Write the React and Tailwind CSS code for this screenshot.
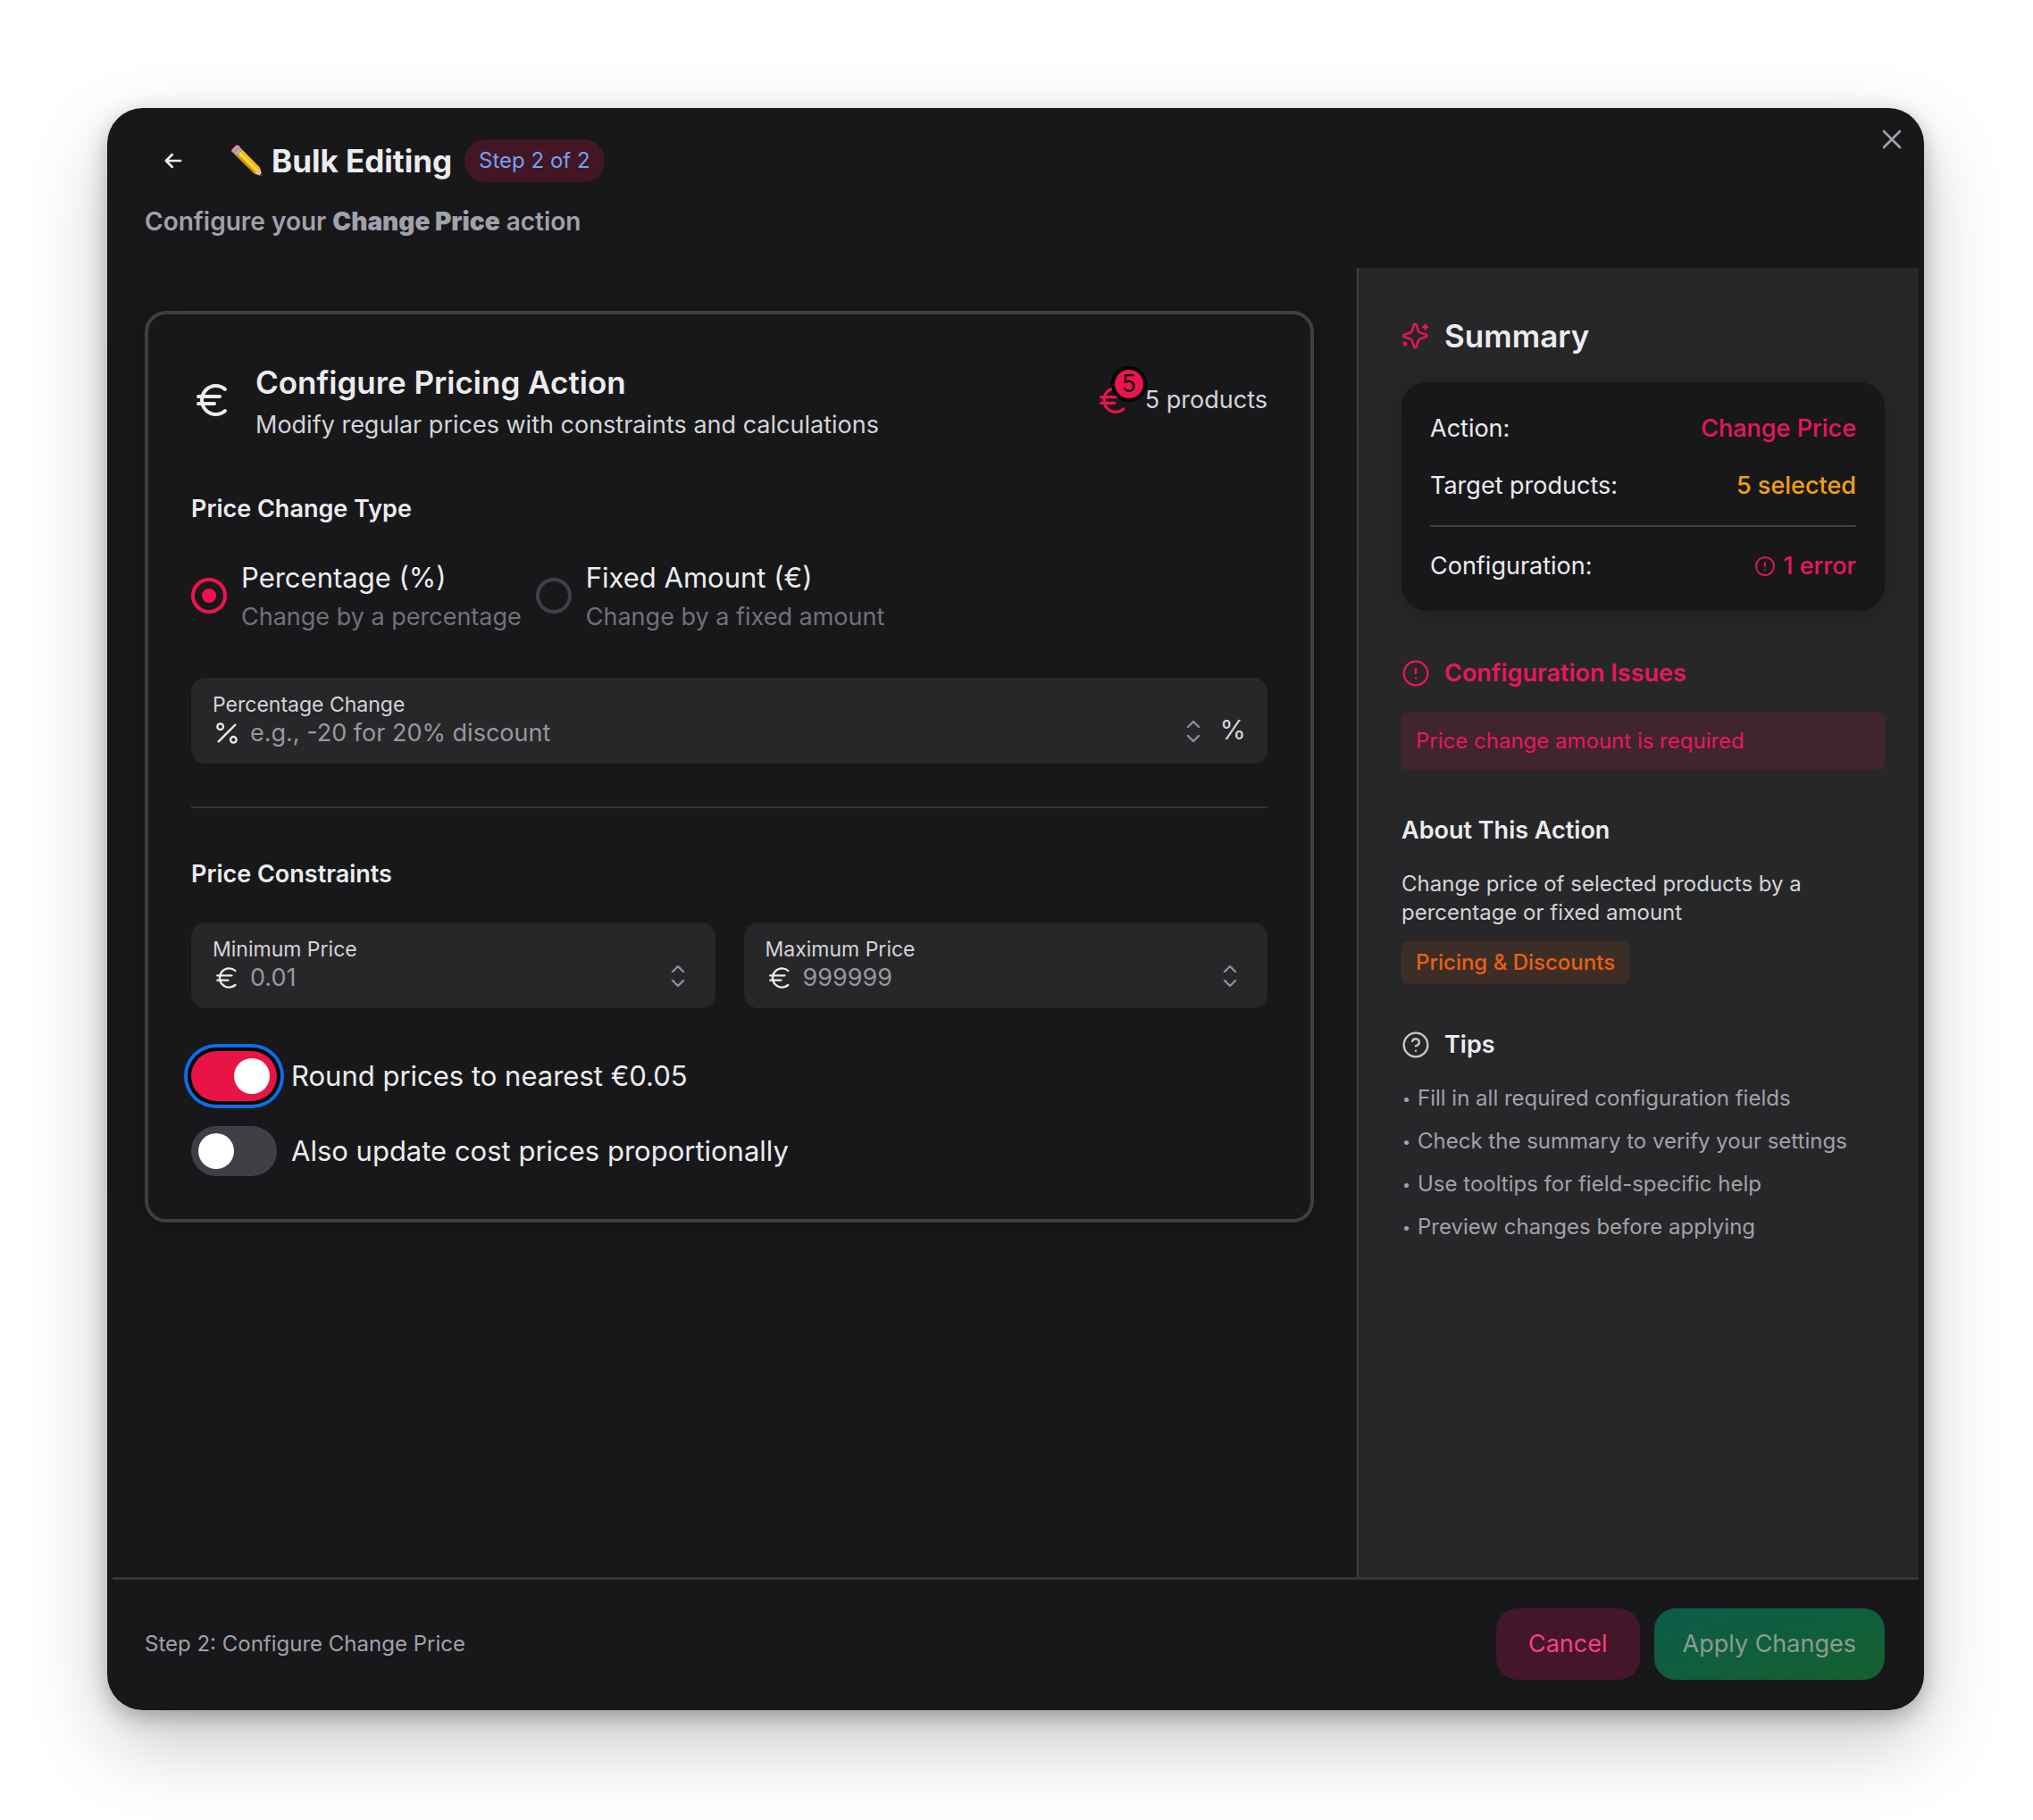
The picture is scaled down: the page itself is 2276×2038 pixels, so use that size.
import React, { useState } from "react"
import { CircleAlert, CircleHelp, Euro, Percent, X } from "lucide-react"

const TIPS = [
    "Fill in all required configuration fields",
    "Check the summary to verify your settings",
    "Use tooltips for field-specific help",
    "Preview changes before applying",
]

const CHANGE_TYPES = [
    {
        id: "percentage",
        title: "Percentage (%)",
        description: "Change by a percentage",
    },
    {
        id: "fixed",
        title: "Fixed Amount (€)",
        description: "Change by a fixed amount",
    },
]

function ArrowLeftIcon({ className }) {
    return (
        <svg
            className={className}
            viewBox="0 0 24 24"
            fill="none"
            stroke="currentColor"
            strokeWidth="2.2"
            strokeLinecap="round"
            strokeLinejoin="round"
            aria-hidden="true"
        >
            <path d="M5 12h14M5 12l6 6M5 12l6-6" />
        </svg>
    )
}

function PencilIcon({ className }) {
    return (
        <svg className={className} viewBox="0 0 36 36" aria-hidden="true">
            <path
                d="M1.5 5.5 6 1c1.6-1.2 4.4.4 5.2 2.4L4.4 10C2 9.2.4 7 1.5 5.5Z"
                fill="#ef8a94"
            />
            <path d="M3 8.8 9.8 2.2l3.4 3.4-6.8 6.8Z" fill="#8d99a6" />
            <path d="m4.7 10.6 6.7-6.7.9.9-6.7 6.7Z" fill="#c3ccd4" />
            <path d="m6.4 12.4 6.8-6.8L33 25.4l-6.4 6.8Z" fill="#f7b916" />
            <path d="m8.7 10.1 2.2-2.2 20 20-2.1 2.3Z" fill="#ffd84a" />
            <path d="m6.4 12.4 1.6-1.6 20.2 19.8-1.6 1.6Z" fill="#d98c0c" />
            <path
                d="m26.6 32.2 6.4-6.8 2.4 9.3c.1.5-.2.7-.6.6Z"
                fill="#e9c394"
            />
            <path d="m32.2 34.5 2.5-2.5.7 2.8c.1.4-.1.6-.5.5Z" fill="#3a3a3a" />
        </svg>
    )
}

function SparklesIcon({ className }) {
    return (
        <svg
            className={className}
            viewBox="0 0 24 24"
            fill="none"
            stroke="currentColor"
            strokeWidth="1.9"
            strokeLinecap="round"
            strokeLinejoin="round"
            aria-hidden="true"
        >
            <path d="M11.5 2c.6 0 .9.4 1.1 1L14 7.6a3 3 0 0 0 1.9 1.9l4.6 1.5c1.200.4 1.200 1.600 0 2l-4.600 1.500a3 3 0 0 0-1.900 1.900L12.600 21c-.4 1.200-1.800 1.200-2.200 0L9 16.400a3 3 0 0 0-1.900-1.900L2.500 13c-1.200-.4-1.200-1.600 0-2l4.600-1.500A3 3 0 0 0 9 7.600L10.400 3c.2-.6.5-1 1.100-1Z" />
            <path d="M20 2.8v3.6M21.8 4.6h-3.6" />
            <circle cx="3" cy="18.8" r="0.9" fill="currentColor" />
        </svg>
    )
}

function Chevron({ d }) {
    return (
        <svg
            className="h-2 w-4"
            viewBox="0 0 16 8"
            fill="none"
            stroke="currentColor"
            strokeWidth="2.4"
            strokeLinecap="round"
            strokeLinejoin="round"
            aria-hidden="true"
        >
            <path d={d} />
        </svg>
    )
}

function Spinner({ label }) {
    return (
        <div className="flex w-9 flex-col items-center gap-2 text-[#918e9a]">
            <button type="button" aria-label={`Increase ${label}`}>
                <Chevron d="m2 7 6-6 6 6" />
            </button>
            <button type="button" aria-label={`Decrease ${label}`}>
                <Chevron d="m2 1 6 6 6-6" />
            </button>
        </div>
    )
}

function NumberField({ id, label, placeholder, icon: Icon, suffix }) {
    const [value, setValue] = useState("")

    return (
        <div className="flex h-24 min-w-0 flex-1 flex-col rounded-2xl bg-[#27272a] px-6 pt-3.5">
            <label
                htmlFor={id}
                className="text-[23px] leading-8 text-[#d4d4d8]"
            >
                {label}
            </label>
            <div className="flex h-8 items-center">
                <Icon
                    className="mr-2.5 size-8 shrink-0 text-[#ececee]"
                    strokeWidth={1.75}
                />
                <input
                    id={id}
                    type="text"
                    inputMode="decimal"
                    value={value}
                    placeholder={placeholder}
                    onChange={(event) => setValue(event.target.value)}
                    className="min-w-0 flex-1 bg-transparent text-[27px] leading-8 text-[#ececee] outline-none placeholder:text-[#98989f]"
                />
                <div className="flex items-center gap-3 pb-1">
                    <Spinner label={label} />
                    {suffix && (
                        <span className="pb-1 text-[30px] leading-8 text-[#d4d4d8]">
                            {suffix}
                        </span>
                    )}
                </div>
            </div>
        </div>
    )
}

function Toggle({ label, checked, onChange, focused }) {
    return (
        <label className="flex items-center gap-4 text-[31px] leading-10 text-[#ececee]">
            <input
                type="checkbox"
                role="switch"
                checked={checked}
                onChange={(event) => onChange(event.target.checked)}
                className={`flex h-14 w-24 shrink-0 appearance-none items-center rounded-full bg-[#3f3f46] px-2 outline-none before:size-10 before:rounded-full before:bg-white before:content-[''] checked:justify-end checked:bg-[#e81446] ${
                    focused
                        ? "shadow-[0_0_0_4px_#000,0_0_0_8px_#0a6fe8]"
                        : ""
                }`}
            />
            {label}
        </label>
    )
}

function PricingCard() {
    const [changeType, setChangeType] = useState("percentage")
    const [roundPrices, setRoundPrices] = useState(true)
    const [updateCost, setUpdateCost] = useState(false)

    return (
        <section className="rounded-3xl border-4 border-[#3f3f42] bg-[#18181b] p-12 shadow-[0_4px_40px_rgba(0,0,0,0.25)]">
            <div className="flex items-center justify-between">
                <div className="flex items-center gap-6">
                    <Euro className="size-12 text-[#ececee]" />
                    <div>
                        <h2 className="text-[35px] leading-14 font-semibold text-[#ececee]">
                            Configure Pricing Action
                        </h2>
                        <p className="text-[27px] leading-10 text-[#d4d4d8]">
                            Modify regular prices with constraints and
                            calculations
                        </p>
                    </div>
                </div>
                <div className="flex items-center gap-4">
                    <div className="relative">
                        <Euro className="size-10 text-[#e81446]" />
                        <span className="absolute -top-[18px] -right-[18px] flex size-10 items-center justify-center rounded-full border-4 border-black bg-[#f01250] text-[27px] leading-8 text-black">
                            5
                        </span>
                    </div>
                    <span className="text-[27px] leading-10 text-[#d4d4d8]">
                        5 products
                    </span>
                </div>
            </div>

            <fieldset className="mt-[58px]">
                <legend className="text-[27px] leading-8 font-semibold text-[#ececee]">
                    Price Change Type
                </legend>
                <div className="mt-[35px] flex gap-4">
                    {CHANGE_TYPES.map((type) => (
                        <label
                            key={type.id}
                            className="flex items-center gap-4"
                        >
                            <input
                                type="radio"
                                name="change-type"
                                value={type.id}
                                checked={changeType === type.id}
                                onChange={() => setChangeType(type.id)}
                                className="flex size-10 shrink-0 appearance-none items-center justify-center rounded-full border-4 border-[#3f3f46] before:size-4 before:rounded-full before:content-[''] checked:border-[#f01250] checked:before:bg-[#f01250]"
                            />
                            <span className="pt-1">
                                <span className="block text-[31px] leading-11 text-[#ececee]">
                                    {type.title}
                                </span>
                                <span className="block text-[27px] leading-11 text-[#71717a]">
                                    {type.description}
                                </span>
                            </span>
                        </label>
                    ))}
                </div>
            </fieldset>

            <div className="mt-[46px] flex">
                <NumberField
                    id="percentage-change"
                    label="Percentage Change"
                    placeholder="e.g., -20 for 20% discount"
                    icon={Percent}
                    suffix="%"
                />
            </div>

            <hr className="mt-12 border-t-2 border-[#343437]" />

            <h3 className="mt-[58px] text-[27px] leading-8 font-semibold text-[#ececee]">
                Price Constraints
            </h3>
            <div className="mt-[38px] flex gap-8">
                <NumberField
                    id="min-price"
                    label="Minimum Price"
                    placeholder="0.01"
                    icon={Euro}
                />
                <NumberField
                    id="max-price"
                    label="Maximum Price"
                    placeholder="999999"
                    icon={Euro}
                />
            </div>

            <div className="mt-12 flex flex-col items-start gap-7">
                <Toggle
                    label="Round prices to nearest €0.05"
                    checked={roundPrices}
                    onChange={setRoundPrices}
                    focused
                />
                <Toggle
                    label="Also update cost prices proportionally"
                    checked={updateCost}
                    onChange={setUpdateCost}
                />
            </div>
        </section>
    )
}

function Summary() {
    return (
        <aside className="w-[629px] shrink-0 border-l-2 border-[#3f3f42] bg-[#27272a] pt-14 pr-[38px] pb-12 pl-12">
            <h2 className="flex items-center gap-4 text-[35px] leading-10 font-semibold text-[#ececee]">
                <SparklesIcon className="size-8 text-[#f01250]" />
                Summary
            </h2>
            <div className="mt-8 flex flex-col gap-6 rounded-[28px] bg-[#18181b] px-8 pt-8 pb-[30px] text-[27px] leading-10 text-[#ececee] shadow-[0_4px_48px_rgba(0,0,0,0.18)]">
                <div className="flex justify-between">
                    <span>Action:</span>
                    <span className="font-medium text-[#e8175d]">
                        Change Price
                    </span>
                </div>
                <div className="flex justify-between">
                    <span>Target products:</span>
                    <span className="font-medium text-[#f0a010]">
                        5 selected
                    </span>
                </div>
                <hr className="border-t-2 border-[#3f3f42]" />
                <div className="flex justify-between">
                    <span>Configuration:</span>
                    <span className="flex items-center gap-2 font-medium text-[#e8175d]">
                        <CircleAlert className="size-6" strokeWidth={1.75} />1
                        error
                    </span>
                </div>
            </div>

            <h3 className="mt-[54px] flex items-center gap-4 text-[27px] leading-8 font-semibold text-[#e8175d]">
                <CircleAlert className="size-8" strokeWidth={1.75} />
                Configuration Issues
            </h3>
            <p className="mt-7 rounded-md bg-[#40242f] p-4 text-[24px] leading-8 text-[#e8175d]">
                Price change amount is required
            </p>

            <h3 className="mt-13 text-[27px] leading-8 font-semibold text-[#ececee]">
                About This Action
            </h3>
            <p className="mt-7 text-[24px] leading-8 text-[#d4d4d8]">
                Change price of selected products by a percentage or fixed
                amount
            </p>
            <div className="mt-4 flex">
                <span className="flex h-12 items-center rounded-lg bg-[#3d2d27] px-4 text-[24px] leading-8 font-medium text-[#ea6010]">
                    Pricing &amp; Discounts
                </span>
            </div>

            <h3 className="mt-13 flex items-center gap-4 text-[27px] leading-8 font-semibold text-[#ececee]">
                <CircleHelp
                    className="size-8 text-[#c8c8cc]"
                    strokeWidth={1.75}
                />
                Tips
            </h3>
            <ul className="mt-7 flex flex-col gap-4 text-[24px] leading-8 text-[#a1a1aa]">
                {TIPS.map((tip) => (
                    <li key={tip} className="flex">
                        <span className="w-[18px] pl-px text-[16px]">•</span>
                        {tip}
                    </li>
                ))}
            </ul>
        </aside>
    )
}

export default function App() {
    return (
        <div className="flex min-h-screen bg-white pt-[121px] pr-[122px] pb-[123px] pl-[120px] font-['Inter','Liberation_Sans',sans-serif]">
            <div
                role="dialog"
                aria-labelledby="dialog-title"
                className="relative flex min-w-0 flex-1 flex-col rounded-[40px] bg-[#18181b] shadow-[0_36px_90px_rgba(0,0,0,0.22),0_8px_24px_rgba(0,0,0,0.26)]"
            >
                <button
                    type="button"
                    aria-label="Close"
                    className="absolute top-[17px] right-[18px] text-[#a1a1aa]"
                >
                    <X className="size-9" strokeWidth={1.75} />
                </button>
                <header className="px-[42px] pt-[35px] pb-9">
                    <div className="flex h-12 items-center">
                        <button
                            type="button"
                            aria-label="Back"
                            className="flex h-12 w-16 items-center justify-center text-[#ececee]"
                        >
                            <ArrowLeftIcon className="size-7" />
                        </button>
                        <h1
                            id="dialog-title"
                            className="ml-8 flex items-center gap-2.5 text-[35px] leading-12 font-bold text-[#ececee]"
                        >
                            <PencilIcon className="size-9" />
                            Bulk Editing
                        </h1>
                        <span className="ml-3.5 flex h-12 items-center rounded-full bg-[#431623] px-4 text-[24px] leading-8 text-[#6ea2f5]">
                            Step 2 of 2
                        </span>
                    </div>
                    <p className="mt-7 text-[28px] leading-8 font-semibold text-[#a1a1aa]">
                        Configure your{" "}
                        <strong className="font-black">Change Price</strong>{" "}
                        action
                    </p>
                </header>

                <div className="mx-1.5 flex flex-1">
                    <main className="min-w-0 flex-1 px-12 pt-12 pb-12 pl-9">
                        <PricingCard />
                    </main>
                    <Summary />
                </div>

                <footer className="mx-1.5 flex items-center justify-between border-t-3 border-[#363639] pt-8 pr-[38px] pb-[34px] pl-9">
                    <span className="text-[24px] leading-8 text-[#a1a1aa]">
                        Step 2: Configure Change Price
                    </span>
                    <div className="flex gap-4">
                        <button
                            type="button"
                            className="h-20 rounded-3xl bg-[#431629] px-9 text-[27px] leading-8 text-[#f8407f]"
                        >
                            Cancel
                        </button>
                        <button
                            type="button"
                            disabled
                            className="h-20 rounded-3xl bg-linear-to-br from-[#0c5c4a] to-[#15602e] px-8 text-[27px] leading-8 text-[#8b9c90]"
                        >
                            Apply Changes
                        </button>
                    </div>
                </footer>
            </div>
        </div>
    )
}
